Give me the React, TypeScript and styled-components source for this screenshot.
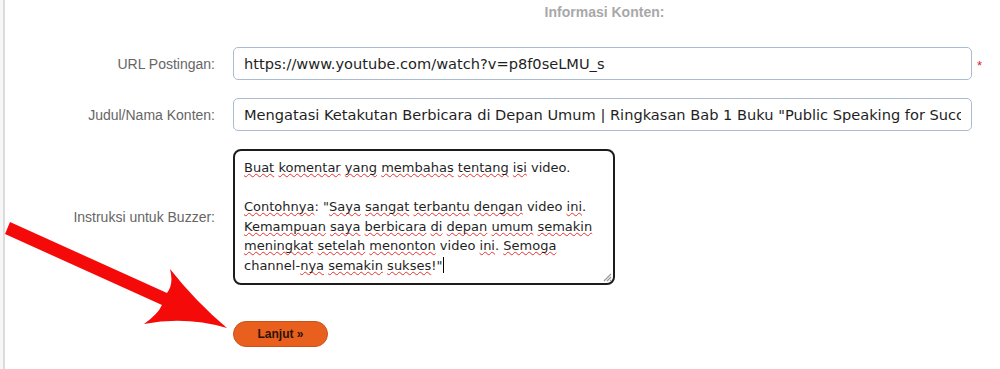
import React from 'react';
import styled, { createGlobalStyle } from 'styled-components';

const GlobalStyle = createGlobalStyle`
    html, body {
        margin: 0;
        padding: 0;
        background: #f7f7f7;
    }
    #root {
        min-height: 369px;
    }
`;

const Word: React.FC<{ children: React.ReactNode }> = ({ children }) => <SMisspelled>{children}</SMisspelled>;

const App: React.FC = () => {
    return (
        <>
            <GlobalStyle />
            <SPage>
                <SForm>
                    <span />
                    <SHeading>Informasi Konten:</SHeading>
                    <span />

                    <SLabel>URL Postingan:</SLabel>
                    <SInput readOnly defaultValue="https://www.youtube.com/watch?v=p8f0seLMU_s" />
                    <SRequired>*</SRequired>

                    <SLabel>Judul/Nama Konten:</SLabel>
                    <SInput
                        readOnly
                        defaultValue={'Mengatasi Ketakutan Berbicara di Depan Umum | Ringkasan Bab 1 Buku "Public Speaking for Success"'}
                    />
                    <span />

                    <SLabel>Instruksi untuk Buzzer:</SLabel>
                    <STextArea>
                        <Word>Buat</Word> <Word>komentar</Word> <Word>yang</Word> <Word>membahas</Word> <Word>tentang</Word>{' '}
                        <Word>isi</Word> video.
                        {'\n\n'}
                        <Word>Contohnya</Word>: "<Word>Saya</Word> <Word>sangat</Word> <Word>terbantu</Word>{' '}
                        <Word>dengan</Word> video <Word>ini</Word>. <Word>Kemampuan</Word> <Word>saya</Word>{' '}
                        <Word>berbicara</Word> <Word>di</Word> <Word>depan</Word> <Word>umum</Word> <Word>semakin</Word>{' '}
                        <Word>meningkat</Word> <Word>setelah</Word> <Word>menonton</Word> video <Word>ini</Word>.{' '}
                        <Word>Semoga</Word> channel-<Word>nya</Word> <Word>semakin</Word> <Word>sukses</Word>!"
                        <SCaret />
                        <SGrip width="10" height="10" viewBox="0 0 10 10">
                            <path d="M9 2 L2 9 M9 5 L5 9 M9 8 L8 9" stroke="#9a9a9a" strokeWidth="1.2" />
                        </SGrip>
                    </STextArea>
                    <span />

                    <span />
                    <SButtonRow>
                        <SButton type="button">Lanjut »</SButton>
                    </SButtonRow>
                    <span />
                </SForm>

                <SArrow width="240" height="130" viewBox="0 210 240 130">
                    <path
                        d="M10 222 L167 293 Q174 284 170 269 Q196 302 227 328 Q186 316 144 324 Q158 314 162 305 L5 234 Z"
                        fill="#f50a0a"
                    />
                </SArrow>
            </SPage>
        </>
    );
};

export default App;

const SPage = styled.div`
    position: relative;
    margin-left: 3px;
    min-height: 369px;
    box-sizing: border-box;
    border-left: 2px solid #dcdcdc;
    background: #ffffff;
    padding-top: 4px;
`;

const SForm = styled.div`
    display: grid;
    grid-template-columns: 210px 739px 20px;
    column-gap: 18px;
    row-gap: 18px;
    align-items: center;
    font-family: 'Liberation Sans', Arial, sans-serif;
`;

const SHeading = styled.div`
    text-align: center;
    padding-left: 4px;
    margin-bottom: 9px;
    font-size: 14px;
    line-height: 16px;
    font-weight: bold;
    color: #a8a8a8;
`;

const SLabel = styled.label`
    text-align: right;
    font-size: 14px;
    color: #666666;
`;

const SInput = styled.input`
    box-sizing: border-box;
    width: 739px;
    height: 33px;
    margin: 0;
    padding: 0 10px;
    border: 1px solid #a9bcd2;
    border-radius: 5px;
    background: #ffffff;
    font-family: 'DejaVu Sans', Verdana, sans-serif;
    font-size: 14.6px;
    color: #1f1f1f;
    outline: none;
`;

const SRequired = styled.span`
    margin-left: -13px;
    padding-top: 4px;
    font-size: 13px;
    color: #e0202a;
`;

const STextArea = styled.div`
    position: relative;
    box-sizing: border-box;
    width: 382px;
    height: 136px;
    padding: 7px 9px;
    border: 2px solid #1c1c1c;
    border-radius: 8px;
    font-family: 'DejaVu Sans', Verdana, sans-serif;
    font-size: 13px;
    line-height: 19.5px;
    color: #1f1f1f;
    white-space: pre-wrap;
    overflow: hidden;
`;

const SMisspelled = styled.span`
    text-decoration: underline wavy #e5322d;
    text-decoration-thickness: 1px;
    text-underline-offset: 1px;
    text-decoration-skip-ink: none;
`;

const SCaret = styled.span`
    display: inline-block;
    width: 1px;
    height: 16px;
    margin-left: 1px;
    vertical-align: -3px;
    background: #000000;
`;

const SGrip = styled.svg`
    position: absolute;
    right: 1px;
    bottom: 1px;
`;

const SButtonRow = styled.div`
    display: flex;
    margin-top: 18px;
`;

const SButton = styled.button`
    width: 95px;
    height: 26px;
    border: 1px solid #c9531a;
    border-radius: 13px;
    background: #e95f1d;
    font-family: 'Liberation Sans', Arial, sans-serif;
    font-size: 12px;
    font-weight: bold;
    color: #2a140a;
    cursor: pointer;
`;

const SArrow = styled.svg`
    position: absolute;
    left: -5px;
    top: 210px;
    pointer-events: none;
`;
